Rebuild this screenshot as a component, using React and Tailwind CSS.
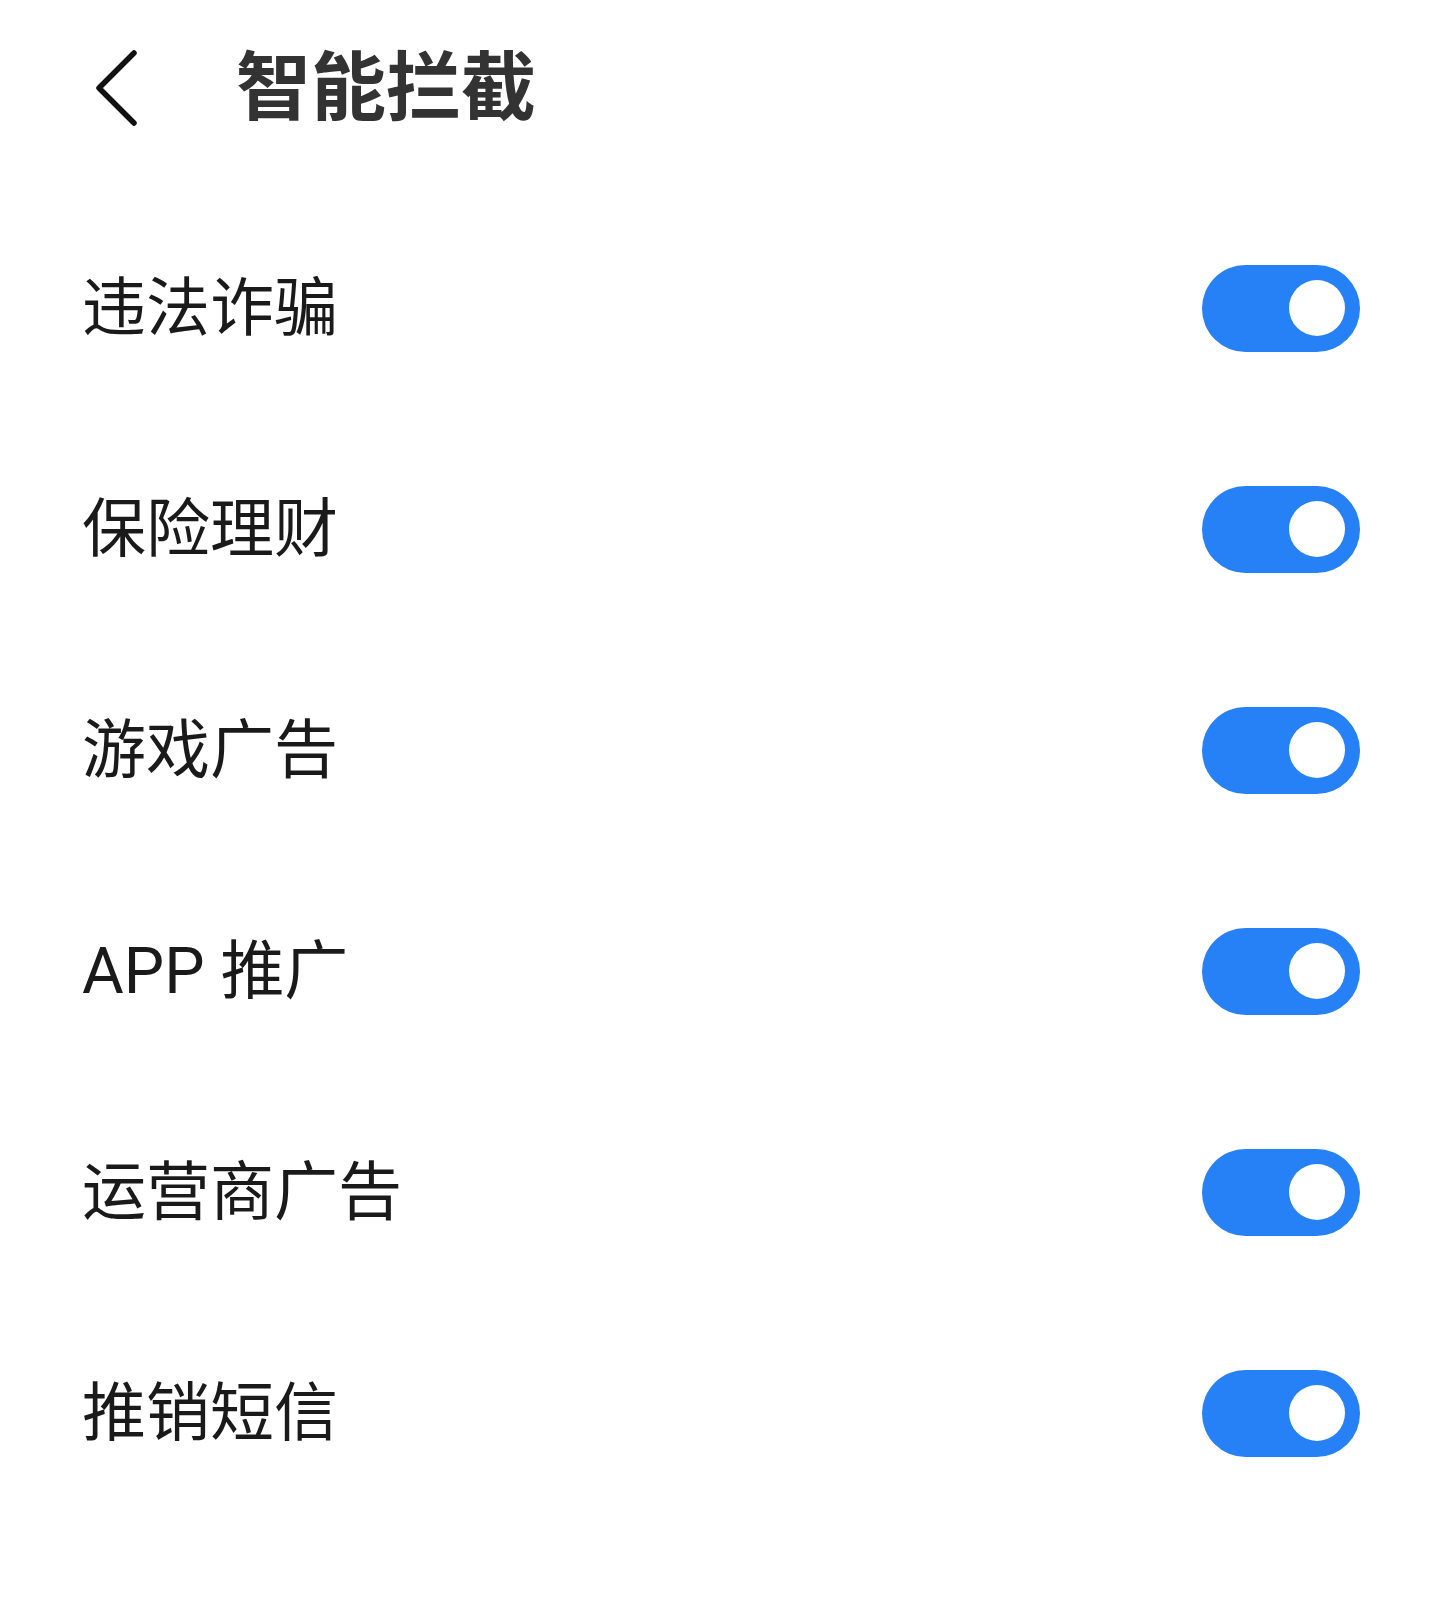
import React, { useState } from 'react';

const ITEMS = ['违法诈骗', '保险理财', '游戏广告', 'APP 推广', '运营商广告', '推销短信'];

const FONT = { fontFamily: 'Roboto, "Noto Sans CJK SC", sans-serif' };

function Toggle({ on, onClick }) {
  return (
    <button
      onClick={onClick}
      className={`relative w-[158px] h-[87px] rounded-full shrink-0 ${on ? 'bg-[#2680f6]' : 'bg-[#d9d9d9]'}`}
    >
      <span
        className={`absolute top-[15px] w-[56px] h-[56px] rounded-full bg-white ${on ? 'left-[87px]' : 'left-[15px]'}`}
      />
    </button>
  );
}

export default function App() {
  const [state, setState] = useState(ITEMS.map(() => true));

  const flip = (i) => setState((s) => s.map((v, j) => (j === i ? !v : v)));

  return (
    <div className="w-[1441px] min-h-[1624px] bg-white" style={FONT}>
      <div className="h-[172px] pt-[4px] flex items-center">
        <svg className="ml-[93px] w-[48px] h-[78px]" viewBox="0 0 48 78" fill="none">
          <polyline points="41,4 6,39 41,74" stroke="#111" strokeWidth="5.5" strokeLinecap="round" strokeLinejoin="round" />
        </svg>
        <h1 className="ml-[95px] text-[75px] leading-none font-semibold text-[#333]">智能拦截</h1>
      </div>
      <div className="pt-[26px]">
        {ITEMS.map((label, i) => (
          <div key={label} className="h-[221px] flex items-center justify-between pl-[82px] pr-[81px]">
            <span className="text-[64px] leading-none text-[#1a1a1a]">{label}</span>
            <Toggle on={state[i]} onClick={() => flip(i)} />
          </div>
        ))}
      </div>
    </div>
  );
}
